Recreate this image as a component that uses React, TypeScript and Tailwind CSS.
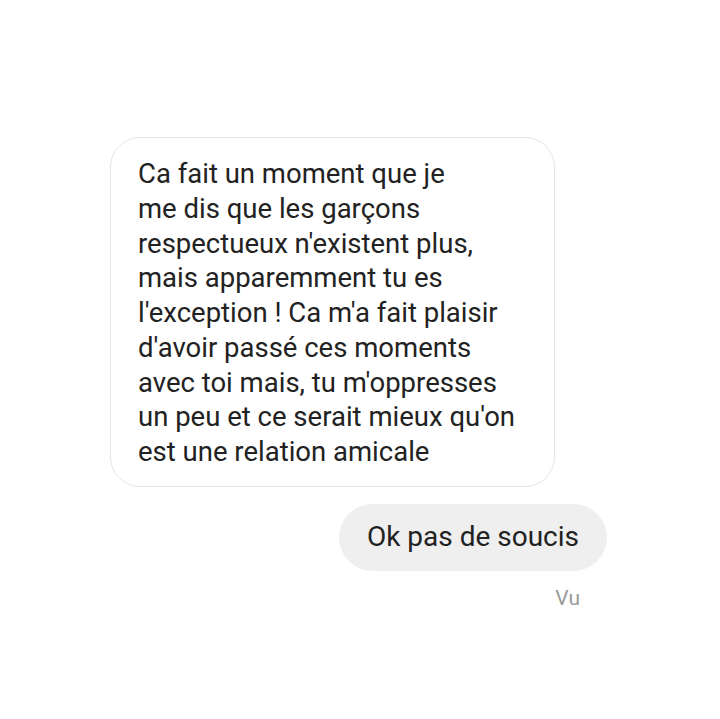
import React from 'react'

const received = [
  'Ca fait un moment que je',
  'me dis que les garçons',
  'respectueux n\'existent plus,',
  'mais apparemment tu es',
  'l\'exception ! Ca m\'a fait plaisir',
  'd\'avoir passé ces moments',
  'avec toi mais, tu m\'oppresses',
  'un peu et ce serait mieux qu\'on',
  'est une relation amicale',
]

export default function App() {
  return (
    <div className="h-[719px] w-[720px] bg-white font-['Roboto',sans-serif] text-[#222222]">
      <div className="flex flex-col pl-[110px] pr-[113px] pt-[137px]">
        {/* incoming message */}
        <div className="w-[445px] rounded-[30px] border-[1.5px] border-[#e6e6e6] pb-[16px] pl-[27px] pr-4 pt-[19px] text-[27.5px] leading-[34.75px]">
          {received.map((line) => (
            <div key={line}>{line}</div>
          ))}
        </div>

        {/* my reply */}
        <div className="mt-[17px] flex justify-end">
          <div className="flex h-[67px] items-center rounded-full bg-[#efefef] px-[28px] text-[28px]">
            Ok pas de soucis
          </div>
        </div>

        <div className="mt-[15px] flex justify-end pr-[27px] text-[21px] leading-[24px] text-[#9a9a9a]">Vu</div>
      </div>
    </div>
  )
}
